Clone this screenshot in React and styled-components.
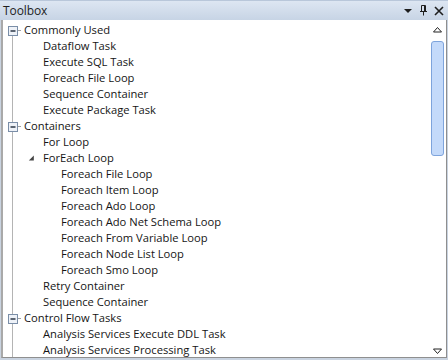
import React from 'react'
import styled, { createGlobalStyle } from 'styled-components'

const GlobalStyle = createGlobalStyle`
  html, body { margin: 0; padding: 0; background: #fff; }
  body { font-family: "Open Sans", "Liberation Sans", sans-serif; }
`

const tree = [
  { label: 'Commonly Used', level: 0, box: true },
  { label: 'Dataflow Task', level: 1 },
  { label: 'Execute SQL Task', level: 1 },
  { label: 'Foreach File Loop', level: 1 },
  { label: 'Sequence Container', level: 1 },
  { label: 'Execute Package Task', level: 1 },
  { label: 'Containers', level: 0, box: true },
  { label: 'For Loop', level: 1 },
  { label: 'ForEach Loop', level: 1, arrow: true },
  { label: 'Foreach File Loop', level: 2 },
  { label: 'Foreach Item Loop', level: 2 },
  { label: 'Foreach Ado Loop', level: 2 },
  { label: 'Foreach Ado Net Schema Loop', level: 2 },
  { label: 'Foreach From Variable Loop', level: 2 },
  { label: 'Foreach Node List Loop', level: 2 },
  { label: 'Foreach Smo Loop', level: 2 },
  { label: 'Retry Container', level: 1 },
  { label: 'Sequence Container', level: 1 },
  { label: 'Control Flow Tasks', level: 0, box: true },
  { label: 'Analysis Services Execute DDL Task', level: 1 },
  { label: 'Analysis Services Processing Task', level: 1 },
]

const Window = styled.div`
  width: 448px;
  height: 360px;
  display: flex;
  flex-direction: column;
  box-sizing: border-box;
  background: #c9d3e0;
  font-family: "Open Sans", "Liberation Sans", sans-serif;
`

const TitleBar = styled.div`
  height: 20px;
  display: flex;
  align-items: center;
  padding: 0 4px 0 3px;
  background: linear-gradient(#dde6f2, #c7d4e5);
  border-top: 1px solid #b9c7da;
  box-sizing: border-box;
`

const Title = styled.span`
  flex: 1;
  font-size: 12px;
  color: #1e1e1e;
  letter-spacing: -0.1px;
`

const TitleButtons = styled.div`
  display: flex;
  align-items: center;
  gap: 6px;
`

const Body = styled.div`
  flex: 1;
  display: flex;
  background: #fff;
  border: 1px solid #8f8f8f;
  border-top: none;
  margin: 0 1px 2px 1px;
  border-left: 2px solid #a9a9a9;
  overflow: hidden;
`

const List = styled.div`
  flex: 1;
  position: relative;
  padding-top: 2px;
`

const TreeLine = styled.div`
  position: absolute;
  left: 9px;
  top: 16px;
  bottom: 0;
  border-left: 1px solid #b4b4b4;
`

const Row = styled.div`
  height: 16px;
  display: flex;
  align-items: center;
  padding-left: ${p => [5, 40, 58][p.$level]}px;
  font-size: 11.2px;
  color: #151515;
  white-space: nowrap;
  position: relative;
`

const Expander = styled.span`
  width: ${p => (p.$box ? 16 : 18)}px;
  height: 16px;
  flex: none;
  display: flex;
  align-items: center;
  margin-left: ${p => (p.$box ? 0 : -18)}px;
`

const Label = styled.span`
  line-height: 16px;
`

const ScrollBar = styled.div`
  width: 17px;
  display: flex;
  flex-direction: column;
  align-items: center;
  padding-top: 4px;
`

const Thumb = styled.div`
  width: 13px;
  height: 115px;
  margin-top: 5px;
  box-sizing: border-box;
  border: 1px solid #7ea4dc;
  border-radius: 3px;
  background: #c4dafa;
`

const Spacer = styled.div`
  flex: 1;
`

const ArrowBtn = styled.div`
  height: 12px;
  display: flex;
  align-items: center;
`

function Box() {
  return (
    <svg width="16" height="12" viewBox="0 0 16 12">
      <line x1="10" y1="6.5" x2="13" y2="6.5" stroke="#a0a0a0" />
      <rect x="0.5" y="2.5" width="9" height="9" fill="#eef2f8" stroke="#7a8ea8" />
      <line x1="2.5" y1="7" x2="7.5" y2="7" stroke="#1e2a3a" strokeWidth="1.4" />
    </svg>
  )
}

function Triangle() {
  return (
    <svg width="18" height="12" viewBox="0 0 18 12" style={{ marginLeft: 3 }}>
      <path d="M7 3 L7 9 L1 9 Z" fill="#444" />
    </svg>
  )
}

export default function App() {
  return (
    <Window>
      <GlobalStyle />
      <TitleBar>
        <Title>Toolbox</Title>
        <TitleButtons>
          <svg width="9" height="6" viewBox="0 0 9 6"><path d="M0 1 L8 1 L4 5 Z" fill="#1e1e1e" /></svg>
          <svg width="9" height="11" viewBox="0 0 9 11">
            <path d="M2.5 0.5 H6.5 V6.5 H2.5 Z M1 6.5 H8 M4.5 6.5 V10.5 M5.5 1 V6" stroke="#1e1e1e" fill="none" />
          </svg>
          <svg width="10" height="10" viewBox="0 0 10 10">
            <path d="M1 1 L9 9 M9 1 L1 9" stroke="#1e1e1e" strokeWidth="1.6" />
          </svg>
        </TitleButtons>
      </TitleBar>
      <Body>
        <List>
          <TreeLine />
          {tree.map((item, i) => (
            <Row key={i} $level={item.level}>
              {item.box && <Expander $box><Box /></Expander>}
              {item.arrow && <Expander><Triangle /></Expander>}
              <Label>{item.label}</Label>
            </Row>
          ))}
        </List>
        <ScrollBar>
          <ArrowBtn>
            <svg width="9" height="6" viewBox="0 0 9 6"><path d="M4.5 0.5 L8.5 5 L0.5 5 Z" fill="#fff" stroke="#222" /></svg>
          </ArrowBtn>
          <Thumb />
          <Spacer />
          <ArrowBtn>
            <svg width="9" height="6" viewBox="0 0 9 6"><path d="M4.5 5.5 L8.5 1 L0.5 1 Z" fill="#fff" stroke="#222" /></svg>
          </ArrowBtn>
        </ScrollBar>
      </Body>
    </Window>
  )
}
